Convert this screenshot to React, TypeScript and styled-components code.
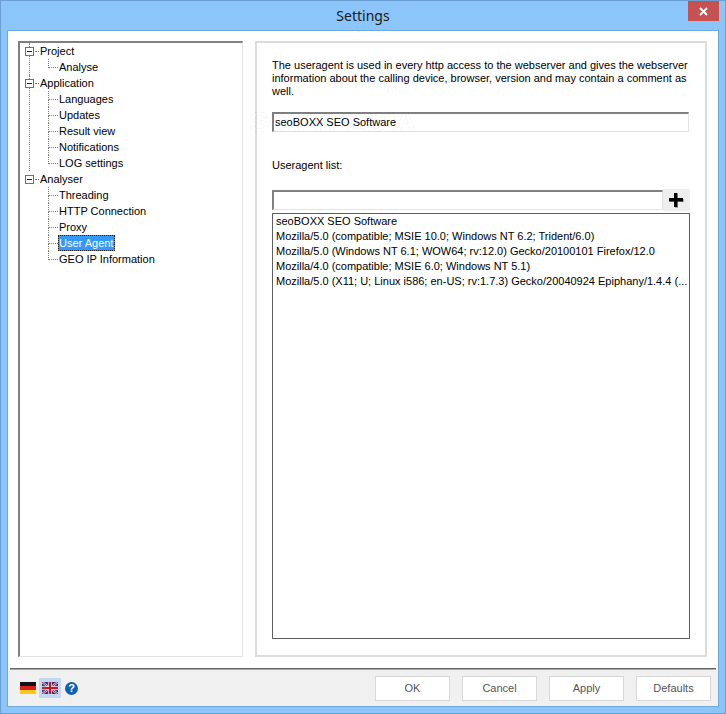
import React from "react";
import styled, { createGlobalStyle } from "styled-components";

const UI_FONT = `"Liberation Sans", sans-serif`;

const treeData = [
  { label: "Project", children: ["Analyse"] },
  {
    label: "Application",
    children: ["Languages", "Updates", "Result view", "Notifications", "LOG settings"],
  },
  {
    label: "Analyser",
    children: ["Threading", "HTTP Connection", "Proxy", "User Agent", "GEO IP Information"],
  },
];

const agents = [
  "seoBOXX SEO Software",
  "Mozilla/5.0 (compatible; MSIE 10.0; Windows NT 6.2; Trident/6.0)",
  "Mozilla/5.0 (Windows NT 6.1; WOW64; rv:12.0) Gecko/20100101 Firefox/12.0",
  "Mozilla/4.0 (compatible; MSIE 6.0; Windows NT 5.1)",
  "Mozilla/5.0 (X11; U; Linux i586; en-US; rv:1.7.3) Gecko/20040924 Epiphany/1.4.4 (...",
];

const App: React.FunctionComponent = () => {
  return (
    <Frame>
      <GlobalStyle />
      <TitleBar>
        <span />
        <Title>Settings</Title>
        <CloseButton>
          <svg width="9" height="9" viewBox="0 0 9 9">
            <path d="M1 1l7 7M8 1L1 8" stroke="#fff" strokeWidth="2" />
          </svg>
        </CloseButton>
      </TitleBar>
      <Client>
        <Body>
          <TreePanel>
            {treeData.map((group, i) => (
              <TreeGroup key={group.label} hasNext={i < treeData.length - 1}>
                <RootRow>
                  <Expander />
                  <RootDots />
                  <RootLabel>{group.label}</RootLabel>
                </RootRow>
                {group.children.map((child, j) => (
                  <ChildRow key={child}>
                    <Elbow isLast={j === group.children.length - 1} />
                    <ChildLabel selected={child === "User Agent"}>{child}</ChildLabel>
                  </ChildRow>
                ))}
              </TreeGroup>
            ))}
          </TreePanel>
          <SettingsPanel>
            <Description>
              The useragent is used in every http access to the webserver and gives the webserver
              information about the calling device, browser, version and may contain a comment as
              well.
            </Description>
            <AgentInput readOnly value="seoBOXX SEO Software" />
            <ListLabel>Useragent list:</ListLabel>
            <AddRow>
              <AddInput readOnly value="" />
              <AddButton>
                <svg width="17" height="17" viewBox="0 0 17 17">
                  <path d="M7 2h3v5h6v3h-6v6H7v-6H2V7h5z" fill="#a8a8a8" />
                  <path d="M6 1h3.400v5h5.600v3.400H9.400V15H6V9.400H1V6h5z" fill="#000" />
                </svg>
              </AddButton>
            </AddRow>
            <AgentList>
              {agents.map((agent) => (
                <AgentRow key={agent}>{agent}</AgentRow>
              ))}
            </AgentList>
          </SettingsPanel>
          <Watermark>SOFTPEDIA</Watermark>
        </Body>
        <Divider />
        <Footer>
          <FlagSlot>
            <svg width="16" height="12" viewBox="0 0 16 12">
              <rect width="16" height="4" fill="#111" />
              <rect y="4" width="16" height="4" fill="#d8201c" />
              <rect y="8" width="16" height="4" fill="#fcc818" />
            </svg>
          </FlagSlot>
          <FlagSlot active>
            <svg width="16" height="12" viewBox="0 0 16 12">
              <rect width="16" height="12" fill="#2c3c8c" />
              <path d="M0 0l16 12M16 0L0 12" stroke="#e8e8f0" strokeWidth="2" />
              <path d="M0 0l16 12M16 0L0 12" stroke="#c81828" strokeWidth="1" />
              <path d="M8 0v12M0 6h16" stroke="#f0f0f4" strokeWidth="3.500" />
              <path d="M8 0v12M0 6h16" stroke="#c81828" strokeWidth="2.200" />
            </svg>
          </FlagSlot>
          <HelpIcon>?</HelpIcon>
          <ButtonRow>
            <DialogButton>OK</DialogButton>
            <DialogButton>Cancel</DialogButton>
            <DialogButton>Apply</DialogButton>
            <DialogButton>Defaults</DialogButton>
          </ButtonRow>
        </Footer>
      </Client>
    </Frame>
  );
};

const GlobalStyle = createGlobalStyle`
  html, body {
    margin: 0;
    padding: 0;
    background: #8bc5fa;
  }
  * {
    box-sizing: border-box;
  }
`;

const Frame = styled.div`
  width: 726px;
  height: 714px;
  display: flex;
  flex-direction: column;
  background-color: #8bc5fa;
  border: 1px solid #6b9ed2;
  overflow: hidden;
  font-family: ${UI_FONT};
  font-size: 11px;
  color: #000;
`;

const TitleBar = styled.div`
  height: 29px;
  flex-shrink: 0;
  display: grid;
  grid-template-columns: 1fr auto 1fr;
  align-items: start;
`;

const Title = styled.div`
  font-family: "Noto Sans", sans-serif;
  font-size: 14px;
  line-height: 29px;
  color: #1a1a1a;
`;

const CloseButton = styled.div`
  justify-self: end;
  width: 31px;
  height: 20px;
  margin-right: 6px;
  display: flex;
  align-items: center;
  justify-content: center;
  background-color: #c75050;
`;

const Client = styled.div`
  flex: 1;
  margin: 0 6px 6px 6px;
  display: flex;
  flex-direction: column;
  border: 1px solid #6fa8dc;
  background-color: #fff;
`;

const Body = styled.div`
  position: relative;
  flex: 1;
  display: flex;
  gap: 12px;
  padding: 10px 11px 11px 10px;
`;

const TreePanel = styled.div`
  width: 225px;
  padding-left: 5px;
  border-style: solid;
  border-width: 2px 1px 1px 2px;
  border-color: #808080 #e3e3e3 #e3e3e3 #808080;
`;

const TreeGroup = styled.div<{ hasNext: boolean }>`
  margin-left: 4px;
  border-left: 1px dotted ${(p) => (p.hasNext ? "#808080" : "transparent")};
`;

const RootRow = styled.div`
  height: 16px;
  margin-left: -5px;
  display: flex;
  align-items: center;
`;

const Expander = styled.span`
  position: relative;
  width: 9px;
  height: 9px;
  flex-shrink: 0;
  background-color: #fff;
  border: 1px solid #707070;

  &::after {
    content: "";
    position: absolute;
    left: 1px;
    right: 1px;
    top: 3px;
    height: 1px;
    background-color: #222;
  }
`;

const RootDots = styled.span`
  width: 4px;
  margin-left: 1px;
  border-top: 1px dotted #808080;
`;

const RootLabel = styled.span`
  margin-left: 1px;
  line-height: 16px;
`;

const ChildRow = styled.div`
  height: 16px;
  padding-left: 18px;
  display: flex;
  align-items: center;
`;

const Elbow = styled.span<{ isLast: boolean }>`
  width: 10px;
  height: 16px;
  flex-shrink: 0;
  display: flex;
  flex-direction: column;

  &::before {
    content: "";
    height: 8px;
    border-left: 1px dotted #808080;
    border-bottom: 1px dotted #808080;
  }

  &::after {
    content: "";
    height: 8px;
    border-left: 1px dotted ${(p) => (p.isLast ? "transparent" : "#808080")};
  }
`;

const ChildLabel = styled.span<{ selected: boolean }>`
  height: 16px;
  line-height: 14px;
  padding: 0 1px 0 0;
  border: 1px ${(p) => (p.selected ? "dotted #222" : "solid transparent")};
  background-color: ${(p) => (p.selected ? "#3399ff" : "transparent")};
  color: ${(p) => (p.selected ? "#fff" : "#000")};
  white-space: nowrap;
`;

const SettingsPanel = styled.div`
  flex: 1;
  min-width: 0;
  display: flex;
  flex-direction: column;
  padding: 16px 15px 16px 15px;
  border-style: solid;
  border-width: 2px;
  border-color: #dcdcdc;
`;

const Description = styled.div`
  line-height: 13px;
  height: 39px;
`;

const SunkenInput = styled.input`
  display: block;
  height: 20px;
  padding: 0 0 2px 1px;
  outline: none;
  font-family: ${UI_FONT};
  font-size: 11px;
  color: #000;
  background-color: transparent;
  border-style: solid;
  border-width: 2px 1px 1px 2px;
  border-color: #808080 #e3e3e3 #e3e3e3 #808080;
`;

const AgentInput = styled(SunkenInput)`
  width: 417px;
  margin-top: 14px;
`;

const ListLabel = styled.div`
  margin-top: 27px;
  line-height: 13px;
`;

const AddRow = styled.div`
  height: 22px;
  margin-top: 17px;
  display: flex;
  align-items: center;
`;

const AddInput = styled(SunkenInput)`
  width: 391px;
`;

const AddButton = styled.div`
  width: 27px;
  height: 22px;
  display: flex;
  align-items: center;
  justify-content: center;
  background-color: #eeeeee;
`;

const AgentList = styled.div`
  flex: 1;
  width: 418px;
  margin-top: 2px;
  padding: 0 3px;
  border: 1px solid #606060;
`;

const AgentRow = styled.div`
  height: 15px;
  line-height: 15px;
  white-space: nowrap;
`;

const Watermark = styled.div`
  position: absolute;
  left: 242px;
  top: 77px;
  font-family: "Liberation Sans", sans-serif;
  font-weight: bold;
  font-size: 29px;
  line-height: 1;
  color: transparent;
  -webkit-text-stroke: 1px rgba(0, 0, 0, 0.05);
  pointer-events: none;
`;

const Divider = styled.div`
  height: 2px;
  margin: 0 2px;
  flex-shrink: 0;
  background: linear-gradient(#666 0 1px, #a8a8a8 1px);
`;

const Footer = styled.div`
  height: 36px;
  flex-shrink: 0;
  display: flex;
  align-items: center;
  padding: 0 7px 0 9px;
  background-color: #f0f0f0;
`;

const FlagSlot = styled.div<{ active?: boolean }>`
  width: 22px;
  height: 20px;
  display: flex;
  align-items: center;
  justify-content: center;
  background-color: ${(p) => (p.active ? "#c5d8f2" : "transparent")};
`;

const HelpIcon = styled.div`
  width: 13px;
  height: 13px;
  margin-left: 4px;
  border-radius: 50%;
  background-color: #1060b0;
  color: #fff;
  font-family: "Liberation Sans", sans-serif;
  font-size: 11px;
  font-weight: bold;
  line-height: 13px;
  text-align: center;
`;

const ButtonRow = styled.div`
  margin-left: auto;
  display: flex;
  gap: 12px;
`;

const DialogButton = styled.div`
  width: 75px;
  height: 25px;
  line-height: 23px;
  text-align: center;
  color: #555;
  background-color: #fff;
  border: 1px solid #d8d8d8;
`;

export default App;
